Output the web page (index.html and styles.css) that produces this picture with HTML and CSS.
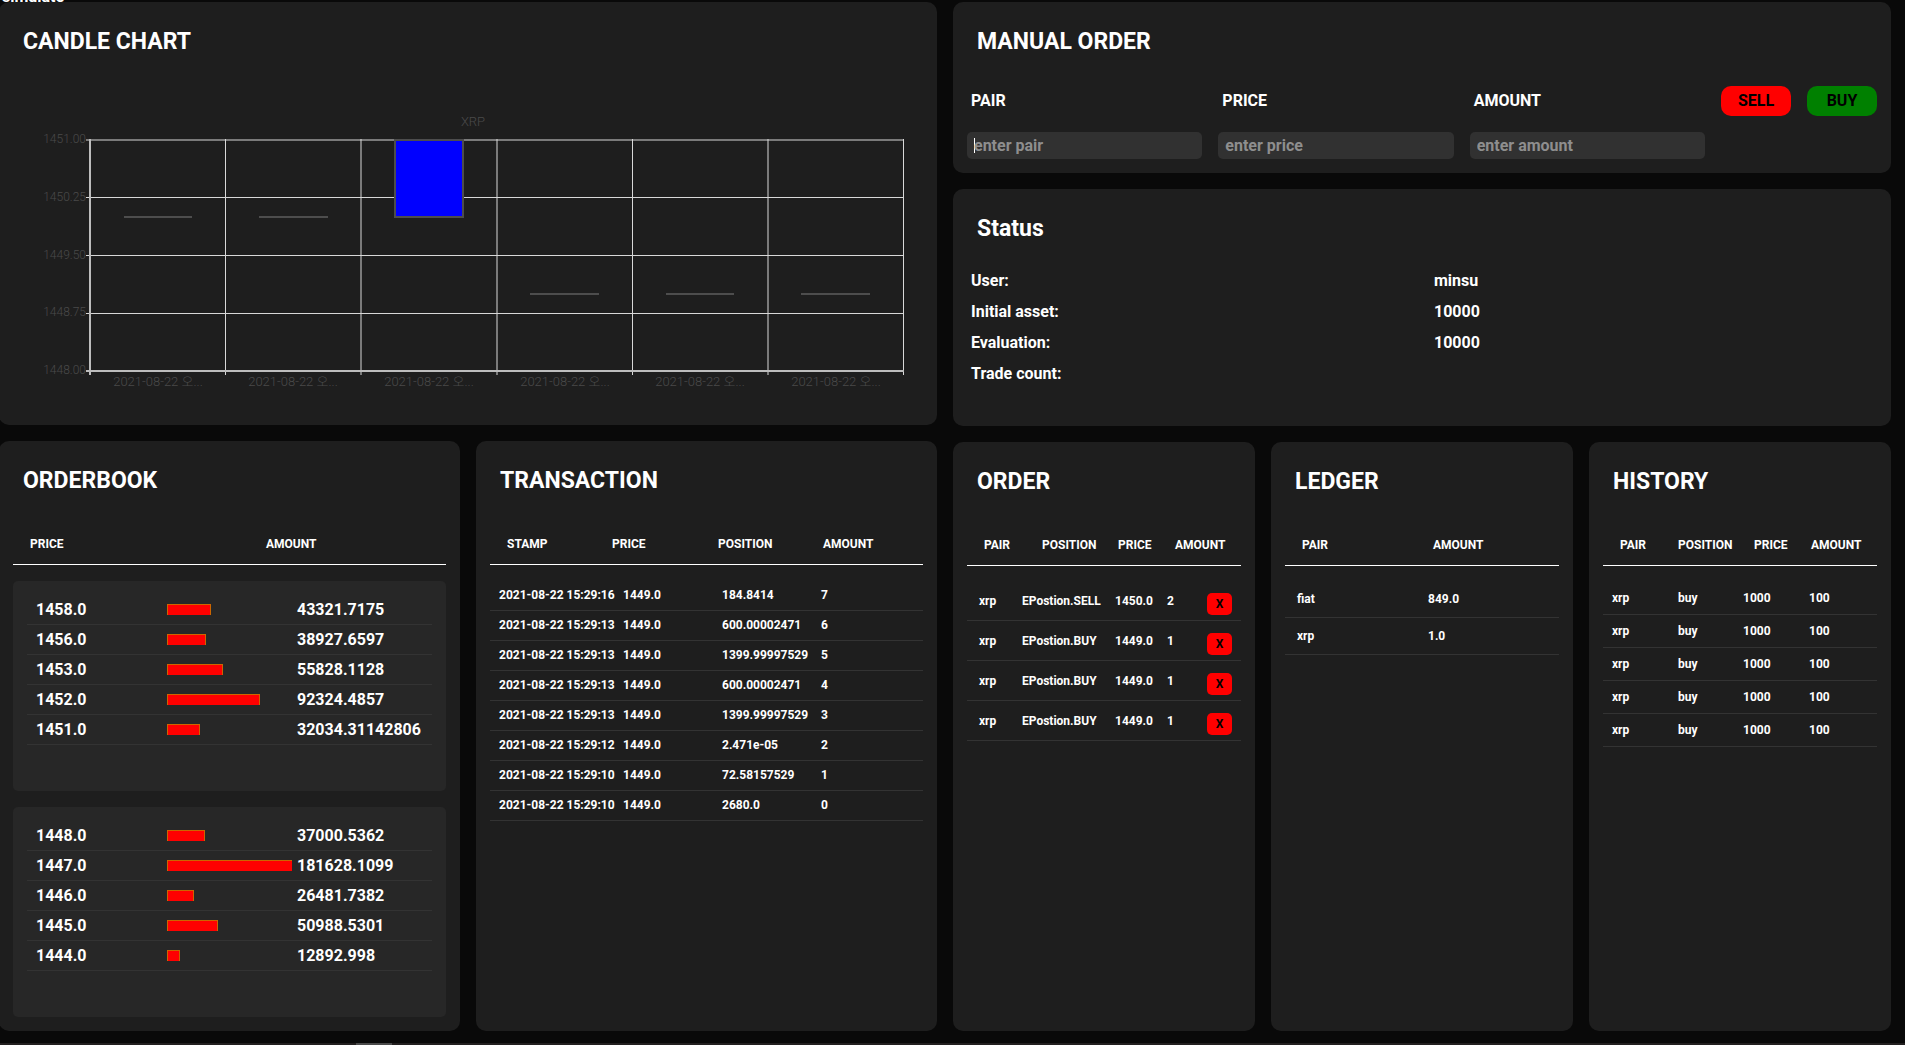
FILE: index.html
```html
<!DOCTYPE html>
<html lang="en">
<head>
<meta charset="utf-8">
<title>Trading simulator</title>
<link rel="stylesheet" href="styles.css">
</head>
<body>
<header class="topbar"><span>simulate</span></header>
<main class="dashboard">
  <div class="column">
    <section class="card">
      <h2 class="card-title">CANDLE CHART</h2>
      <svg class="chart" viewBox="0 0 910 325" role="img" aria-label="XRP candle chart">
        <path class="grid" d="M73 54H891M73 111.5H891M73 169.5H891M73 227.5H891M73 285H891M212.5 53V289M348 53V289M484 53V289M619.5 53V289M755 53V289M890.5 53V289"/>
        <path class="axis" d="M77 53V289M73 285H891"/>
        <path class="candle" d="M111 131H179M246 131H315M517 208H586M653 208H721M788 208H857"/>
        <rect class="candle down" x="382" y="54" width="68" height="77"/>
        <g class="end">
          <text x="73" y="57">1451.00</text>
          <text x="73" y="115">1450.25</text>
          <text x="73" y="173">1449.50</text>
          <text x="73" y="230">1448.75</text>
          <text x="73" y="288">1448.00</text>
        </g>
        <g class="mid">
          <text x="460" y="40">XRP</text>
          <text x="145" y="300">2021-08-22 오...</text>
          <text x="280" y="300">2021-08-22 오...</text>
          <text x="416" y="300">2021-08-22 오...</text>
          <text x="552" y="300">2021-08-22 오...</text>
          <text x="687" y="300">2021-08-22 오...</text>
          <text x="823" y="300">2021-08-22 오...</text>
        </g>
      </svg>
    </section>
    <div class="row two">
      <section class="card">
        <h2 class="card-title">ORDERBOOK</h2>
        <table class="book">
          <thead><tr><th>PRICE</th><th>AMOUNT</th></tr></thead>
          <tbody>
            <tr><td>1458.0</td><td><span class="bar" style="width:44px"></span></td><td>43321.7175</td></tr>
            <tr><td>1456.0</td><td><span class="bar" style="width:39px"></span></td><td>38927.6597</td></tr>
            <tr><td>1453.0</td><td><span class="bar" style="width:56px"></span></td><td>55828.1128</td></tr>
            <tr><td>1452.0</td><td><span class="bar" style="width:93px"></span></td><td>92324.4857</td></tr>
            <tr><td>1451.0</td><td><span class="bar" style="width:33px"></span></td><td>32034.31142806</td></tr>
          </tbody>
          <tbody>
            <tr><td>1448.0</td><td><span class="bar" style="width:38px"></span></td><td>37000.5362</td></tr>
            <tr><td>1447.0</td><td><span class="bar" style="width:182px"></span></td><td>181628.1099</td></tr>
            <tr><td>1446.0</td><td><span class="bar" style="width:27px"></span></td><td>26481.7382</td></tr>
            <tr><td>1445.0</td><td><span class="bar" style="width:51px"></span></td><td>50988.5301</td></tr>
            <tr><td>1444.0</td><td><span class="bar" style="width:13px"></span></td><td>12892.998</td></tr>
          </tbody>
        </table>
      </section>
      <section class="card">
        <h2 class="card-title">TRANSACTION</h2>
        <table class="transactions">
          <thead><tr><th>STAMP</th><th>PRICE</th><th>POSITION</th><th>AMOUNT</th></tr></thead>
          <tbody>
            <tr><td>2021-08-22 15:29:16</td><td>1449.0</td><td>184.8414</td><td>7</td></tr>
            <tr><td>2021-08-22 15:29:13</td><td>1449.0</td><td>600.00002471</td><td>6</td></tr>
            <tr><td>2021-08-22 15:29:13</td><td>1449.0</td><td>1399.99997529</td><td>5</td></tr>
            <tr><td>2021-08-22 15:29:13</td><td>1449.0</td><td>600.00002471</td><td>4</td></tr>
            <tr><td>2021-08-22 15:29:13</td><td>1449.0</td><td>1399.99997529</td><td>3</td></tr>
            <tr><td>2021-08-22 15:29:12</td><td>1449.0</td><td>2.471e-05</td><td>2</td></tr>
            <tr><td>2021-08-22 15:29:10</td><td>1449.0</td><td>72.58157529</td><td>1</td></tr>
            <tr><td>2021-08-22 15:29:10</td><td>1449.0</td><td>2680.0</td><td>0</td></tr>
          </tbody>
        </table>
      </section>
    </div>
  </div>
  <div class="column">
    <section class="card">
      <h2 class="card-title">MANUAL ORDER</h2>
      <form class="order-form">
        <label for="pair">PAIR</label>
        <label for="price">PRICE</label>
        <label for="amount">AMOUNT</label>
        <button class="sell" type="button">SELL</button>
        <button class="buy" type="button">BUY</button>
        <input id="pair" type="text" placeholder="enter pair" autofocus>
        <input id="price" type="text" placeholder="enter price">
        <input id="amount" type="text" placeholder="enter amount">
      </form>
    </section>
    <section class="card status">
      <h2 class="card-title">Status</h2>
      <dl>
        <dt>User:</dt><dd>minsu</dd>
        <dt>Initial asset:</dt><dd>10000</dd>
        <dt>Evaluation:</dt><dd>10000</dd>
        <dt>Trade count:</dt><dd></dd>
      </dl>
    </section>
    <div class="row three">
      <section class="card">
        <h2 class="card-title">ORDER</h2>
        <table class="orders">
          <thead><tr><th>PAIR</th><th>POSITION</th><th>PRICE</th><th>AMOUNT</th></tr></thead>
          <tbody>
            <tr><td>xrp</td><td>EPostion.SELL</td><td>1450.0</td><td>2</td><td class="action"><button class="cancel" type="button">X</button></td></tr>
            <tr><td>xrp</td><td>EPostion.BUY</td><td>1449.0</td><td>1</td><td class="action"><button class="cancel" type="button">X</button></td></tr>
            <tr><td>xrp</td><td>EPostion.BUY</td><td>1449.0</td><td>1</td><td class="action"><button class="cancel" type="button">X</button></td></tr>
            <tr><td>xrp</td><td>EPostion.BUY</td><td>1449.0</td><td>1</td><td class="action"><button class="cancel" type="button">X</button></td></tr>
          </tbody>
        </table>
      </section>
      <section class="card">
        <h2 class="card-title">LEDGER</h2>
        <table class="ledger">
          <thead><tr><th>PAIR</th><th>AMOUNT</th></tr></thead>
          <tbody>
            <tr><td>fiat</td><td>849.0</td></tr>
            <tr><td>xrp</td><td>1.0</td></tr>
          </tbody>
        </table>
      </section>
      <section class="card">
        <h2 class="card-title">HISTORY</h2>
        <table class="history">
          <thead><tr><th>PAIR</th><th>POSITION</th><th>PRICE</th><th>AMOUNT</th></tr></thead>
          <tbody>
            <tr><td>xrp</td><td>buy</td><td>1000</td><td>100</td></tr>
            <tr><td>xrp</td><td>buy</td><td>1000</td><td>100</td></tr>
            <tr><td>xrp</td><td>buy</td><td>1000</td><td>100</td></tr>
            <tr><td>xrp</td><td>buy</td><td>1000</td><td>100</td></tr>
            <tr><td>xrp</td><td>buy</td><td>1000</td><td>100</td></tr>
          </tbody>
        </table>
      </section>
    </div>
  </div>
</main>
<footer class="strip"><span></span></footer>
</body>
</html>
```
FILE: styles.css
```css
* { box-sizing: border-box; }

body {
  margin: 0;
  min-height: 100vh;
  display: flex;
  flex-direction: column;
  overflow-x: hidden;
  background: #090909;
  color: #fff;
  font: 700 16px/16px Roboto, "Noto Sans CJK KR", sans-serif;
}

.topbar {
  position: relative;
  z-index: 1;
  height: 16px;
  margin: -11px 0 -3px;
  padding-left: 2px;
}

.dashboard {
  flex: 1;
  display: grid;
  grid-template-columns: minmax(0, 1fr) minmax(0, 1fr);
  gap: 16px;
  margin: 0 14px 12px -1px;
}

.column { display: flex; flex-direction: column; gap: 16px; }
.row { flex: 1; display: grid; gap: 16px; }
.two { grid-template-columns: repeat(2, minmax(0, 1fr)); }
.three { grid-template-columns: repeat(3, minmax(0, 1fr)); }

.card {
  padding: 14px;
  border-radius: 10px;
  background: #1e1e1e;
}

.card-title {
  margin: 0;
  padding: 12px 10px 30px;
  font-size: 23px;
  line-height: 28px;
}

/* chart */
.chart {
  display: block;
  width: 100%;
  font: 300 13px "Liberation Sans Narrow", Roboto, "Noto Sans CJK KR", sans-serif;
  fill: #4a4a4a;
}
.grid { fill: none; stroke: #d8d8d8; }
.axis { fill: none; stroke: #bdbdbd; stroke-width: 2; }
.candle { fill: none; stroke: #4d4d4d; stroke-width: 2; }
.down { fill: #00f; }
.end { text-anchor: end; font-size: 12px; }
.mid { text-anchor: middle; }

/* manual order */
.order-form {
  display: grid;
  grid-template-columns: repeat(3, minmax(0, 1fr)) 70px 70px;
  gap: 16px;
  align-items: center;
}
.order-form label { padding-left: 4px; }
.order-form input {
  width: 100%;
  height: 27px;
  padding: 0 7px;
  border: 0;
  border-radius: 5px;
  outline: 0;
  background: #313131;
  color: #fff;
  font: inherit;
}
.order-form input::placeholder { color: #8e8e8e; }
/* steady caret while the focused field is empty */
.order-form input:focus:placeholder-shown {
  caret-color: transparent;
  background: linear-gradient(#fff, #fff) 7px 6px / 1px 15px no-repeat #313131;
}

button {
  padding: 0;
  border: 0;
  background: #f00;
  color: #000;
  font: inherit;
}
.sell, .buy { height: 30px; border-radius: 10px; }
.buy { background: #008000; }

/* status */
.status { min-height: 237px; }
.status .card-title { padding-bottom: 22px; }
dl {
  display: grid;
  grid-template-columns: 1fr 1fr;
  column-gap: 16px;
  margin: 0;
  line-height: 31px;
}
dt, dd { margin: 0; padding-left: 4px; min-height: 31px; }

/* tables */
table, thead, tbody, th, td { display: block; }
th, td { padding: 0; text-align: left; white-space: nowrap; font-size: 12px; }
tr { display: grid; align-items: center; border-bottom: 1px solid #333; }
thead tr { height: 40px; padding: 0 0 2px 17px; border-color: #fff; }
tbody { margin-top: 16px; }

.book thead tr { grid-template-columns: 236fr 180fr; }
.book tbody {
  height: 210px;
  padding: 14px;
  border-radius: 5px;
  background: #272727;
}
.book tbody tr { height: 30px; grid-template-columns: repeat(3, minmax(0, 1fr)); }
.book td { font-size: 16px; }
.book td:first-child { padding-left: 9px; }
.book td:nth-child(2) { height: 11px; margin: 0 5px; overflow: hidden; }
.bar { display: block; height: 12px; background: #f00; border: 1px solid #c60; }

.transactions thead tr { grid-template-columns: 105fr 106fr 105fr 100fr; }
.transactions tbody tr { height: 30px; padding: 0 0 2px 9px; grid-template-columns: 124fr 99fr 99fr 102fr; }

.orders thead tr, .history thead tr { grid-template-columns: 58fr 76fr 57fr 66fr; }
.orders tbody, .ledger tbody { margin-top: 15px; }
.orders tbody tr { height: 40px; padding-left: 12px; grid-template-columns: 43fr 93fr 52fr 40fr 34fr; }
.action { padding-top: 6px; }
.cancel { display: block; width: 25px; height: 22px; border-radius: 5px; }

.ledger thead tr { grid-template-columns: 131fr 126fr; }
.ledger tbody tr { height: 37px; padding-left: 12px; grid-template-columns: 131fr 131fr; }

.history tbody tr { height: 33px; padding-left: 9px; grid-template-columns: 66fr 65fr 66fr 68fr; }

.strip { height: 2px; padding-left: 356px; background: #221f1f; }
.strip span { display: block; width: 36px; height: 2px; background: #4a4a4a; }
```
